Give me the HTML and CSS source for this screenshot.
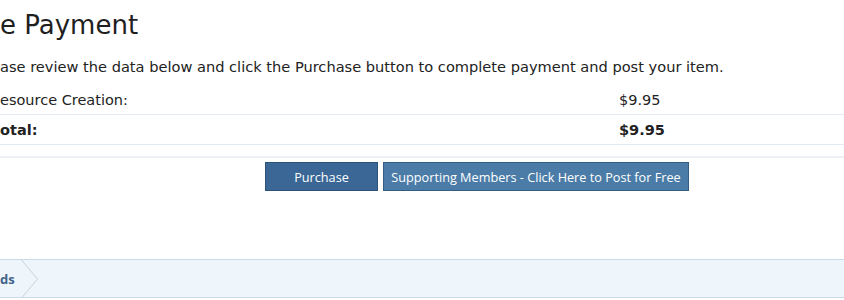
FILE: index.html
```html
<!DOCTYPE html>
<html>
<head>
<meta charset="utf-8">
<link rel="stylesheet" href="styles.css">
</head>
<body>
<div class="page">
  <h1 class="title">e Payment</h1>
  <p class="intro">ase review the data below and click the Purchase button to complete payment and post your item.</p>
  <div class="rows">
    <div class="row">
      <div class="label">esource Creation:</div>
      <div class="amount">$9.95</div>
    </div>
    <div class="row total">
      <div class="label">otal:</div>
      <div class="amount">$9.95</div>
    </div>
  </div>
  <div class="actions">
    <button class="btn primary">Purchase</button>
    <button class="btn secondary">Supporting Members - Click Here to Post for Free</button>
  </div>
  <div class="crumbs">
    <span class="crumb">ds</span>
    <svg class="chev" width="18" height="38" viewBox="0 0 18 38"><path d="M0.5 0 L16.5 19 L0.5 38" fill="none" stroke="#c6d3df" stroke-width="1"/></svg>
  </div>
</div>
</body>
</html>
```

FILE: styles.css
```css
html, body {
  margin: 0;
  padding: 0;
  background: #ffffff;
}
.page {
  font-family: "DejaVu Sans", Verdana, sans-serif;
  color: #222222;
  width: 844px;
  height: 300px;
  overflow: hidden;
  display: flex;
  flex-direction: column;
}
.title {
  margin: 0;
  padding-top: 7px;
  font-size: 26px;
  font-weight: normal;
  line-height: 36px;
  height: 36px;
  color: #1f1f1f;
}
.intro {
  margin: 15px 0 0 0;
  font-size: 14.6px;
  line-height: 18px;
  height: 18px;
  color: #222;
}
.rows {
  margin-top: 9px;
  display: flex;
  flex-direction: column;
}
.row {
  display: flex;
  align-items: center;
  height: 29px;
  border-bottom: 1px solid #e3ebf4;
  font-size: 14.5px;
}
.row.total {
  font-weight: bold;
}
.label {
  width: 619px;
}
.amount {
  flex: 1;
}
.actions {
  margin-top: 11px;
  border-top: 2px solid #edf1f6;
  padding-top: 4px;
  display: flex;
  gap: 5px;
  padding-left: 265px;
  height: 30px;
}
.btn {
  font-family: "Open Sans", "Liberation Sans", sans-serif;
  font-size: 12.7px;
  color: #ffffff;
  height: 29px;
  padding: 0;
  border: 1px solid #2d5278;
  cursor: pointer;
}
.btn.primary {
  width: 113px;
  background: #3a6796;
}
.btn.secondary {
  width: 306px;
  background: #4b7ca7;
  border-color: #345d84;
}
.crumbs {
  margin-top: 67px;
  height: 37px;
  background: #eef5fb;
  border-top: 1px solid #c9dae8;
  border-bottom: 1px solid #c9dae8;
  display: flex;
  align-items: center;
}
.crumb {
  font-family: "Open Sans", "Liberation Sans", sans-serif;
  font-weight: bold;
  font-size: 13px;
  color: #41638a;
}
.chev {
  margin-left: 6px;
  display: block;
}
```
